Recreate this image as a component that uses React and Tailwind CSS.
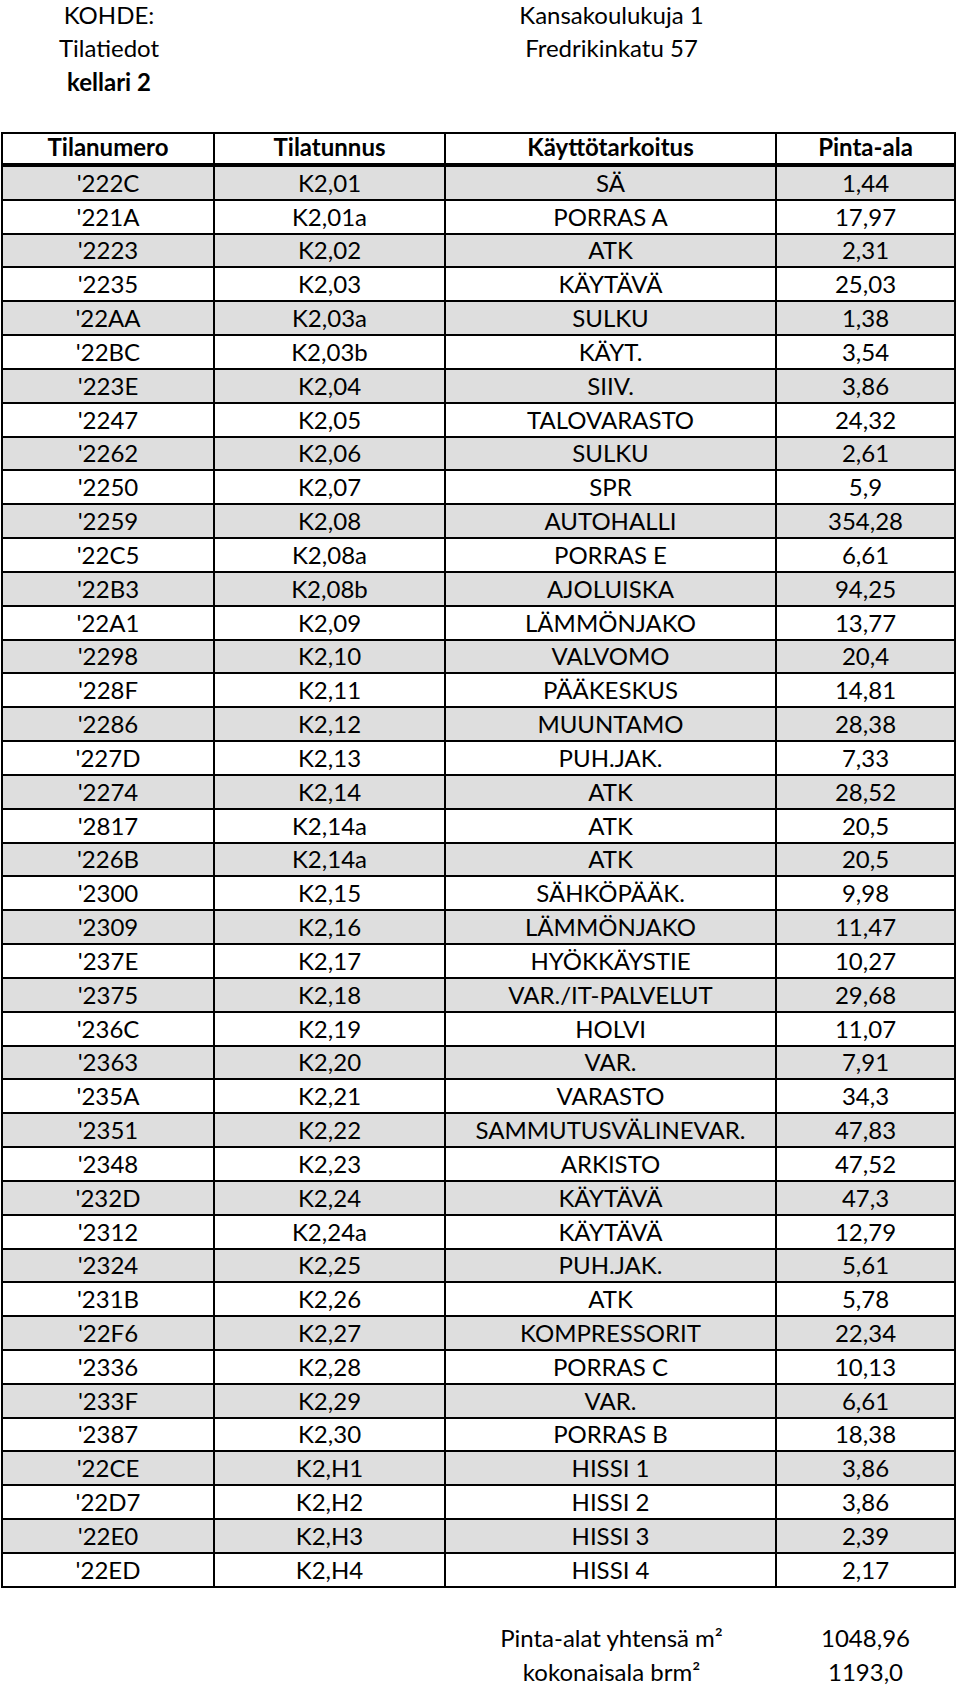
const ROWS = [
  ["'222C", 'K2,01', 'SÄ', '1,44'],
  ["'221A", 'K2,01a', 'PORRAS A', '17,97'],
  ["'2223", 'K2,02', 'ATK', '2,31'],
  ["'2235", 'K2,03', 'KÄYTÄVÄ', '25,03'],
  ["'22AA", 'K2,03a', 'SULKU', '1,38'],
  ["'22BC", 'K2,03b', 'KÄYT.', '3,54'],
  ["'223E", 'K2,04', 'SIIV.', '3,86'],
  ["'2247", 'K2,05', 'TALOVARASTO', '24,32'],
  ["'2262", 'K2,06', 'SULKU', '2,61'],
  ["'2250", 'K2,07', 'SPR', '5,9'],
  ["'2259", 'K2,08', 'AUTOHALLI', '354,28'],
  ["'22C5", 'K2,08a', 'PORRAS E', '6,61'],
  ["'22B3", 'K2,08b', 'AJOLUISKA', '94,25'],
  ["'22A1", 'K2,09', 'LÄMMÖNJAKO', '13,77'],
  ["'2298", 'K2,10', 'VALVOMO', '20,4'],
  ["'228F", 'K2,11', 'PÄÄKESKUS', '14,81'],
  ["'2286", 'K2,12', 'MUUNTAMO', '28,38'],
  ["'227D", 'K2,13', 'PUH.JAK.', '7,33'],
  ["'2274", 'K2,14', 'ATK', '28,52'],
  ["'2817", 'K2,14a', 'ATK', '20,5'],
  ["'226B", 'K2,14a', 'ATK', '20,5'],
  ["'2300", 'K2,15', 'SÄHKÖPÄÄK.', '9,98'],
  ["'2309", 'K2,16', 'LÄMMÖNJAKO', '11,47'],
  ["'237E", 'K2,17', 'HYÖKKÄYSTIE', '10,27'],
  ["'2375", 'K2,18', 'VAR./IT-PALVELUT', '29,68'],
  ["'236C", 'K2,19', 'HOLVI', '11,07'],
  ["'2363", 'K2,20', 'VAR.', '7,91'],
  ["'235A", 'K2,21', 'VARASTO', '34,3'],
  ["'2351", 'K2,22', 'SAMMUTUSVÄLINEVAR.', '47,83'],
  ["'2348", 'K2,23', 'ARKISTO', '47,52'],
  ["'232D", 'K2,24', 'KÄYTÄVÄ', '47,3'],
  ["'2312", 'K2,24a', 'KÄYTÄVÄ', '12,79'],
  ["'2324", 'K2,25', 'PUH.JAK.', '5,61'],
  ["'231B", 'K2,26', 'ATK', '5,78'],
  ["'22F6", 'K2,27', 'KOMPRESSORIT', '22,34'],
  ["'2336", 'K2,28', 'PORRAS C', '10,13'],
  ["'233F", 'K2,29', 'VAR.', '6,61'],
  ["'2387", 'K2,30', 'PORRAS B', '18,38'],
  ["'22CE", 'K2,H1', 'HISSI 1', '3,86'],
  ["'22D7", 'K2,H2', 'HISSI 2', '3,86'],
  ["'22E0", 'K2,H3', 'HISSI 3', '2,39'],
  ["'22ED", 'K2,H4', 'HISSI 4', '2,17'],
];

const HEADERS = ['Tilanumero', 'Tilatunnus', 'Käyttötarkoitus', 'Pinta-ala'];

// same column widths as the sheet, used above and below the table too
const COLS = 'grid grid-cols-[212px_231px_331px_177px]';

const App = () => {
  return (
    <div className="w-[960px] h-[1685px] overflow-hidden bg-white text-black font-[Lato,sans-serif] text-[24px] leading-none">
      {/* Sheet heading */}
      <div className={`${COLS} ml-[3px] h-[132px] grid-rows-[32px_34px_34px]`}>
        <div className="flex items-end justify-center pb-[5px]">KOHDE:</div>
        <div />
        <div className="flex items-end justify-center pb-[5px]">Kansakoulukuja 1</div>
        <div />
        <div className="flex items-end justify-center pb-[6px]">Tilatiedot</div>
        <div />
        <div className="flex items-end justify-center pb-[6px]">Fredrikinkatu 57</div>
        <div />
        <div className="flex items-end justify-center pb-[6px] font-bold">kellari 2</div>
      </div>

      {/* Table */}
      <div className="ml-[1px] w-[955px] border-2 border-b-0 border-black">
        <div className={`${COLS} h-[33px] border-b-4 border-black font-bold`}>
          {HEADERS.map((h, i) => (
            <div key={h} className={`flex items-end justify-center pb-[4px] ${i < 3 ? 'border-r-2 border-black' : ''}`}>
              {h}
            </div>
          ))}
        </div>
        {ROWS.map((row, idx) => (
          <div
            key={idx}
            className={`${COLS} h-[33.83px] border-b-2 border-black ${idx % 2 === 0 ? 'bg-[#dedede]' : 'bg-white'}`}
          >
            {row.map((val, c) => (
              <div key={c} className={`flex items-end justify-center pb-[4px] ${c < 3 ? 'border-r-2 border-black' : ''}`}>
                {val}
              </div>
            ))}
          </div>
        ))}
      </div>

      {/* Totals */}
      <div className={`${COLS} ml-[3px] mt-[34px] grid-rows-[34px_34px]`}>
        <div />
        <div />
        <div className="flex items-end justify-center pb-[6px]">Pinta-alat yhtensä m²</div>
        <div className="flex items-end justify-center pb-[6px]">1048,96</div>
        <div />
        <div />
        <div className="flex items-end justify-center pb-[6px]">kokonaisala brm²</div>
        <div className="flex items-end justify-center pb-[6px]">1193,0</div>
      </div>
    </div>
  );
};

export default App;
